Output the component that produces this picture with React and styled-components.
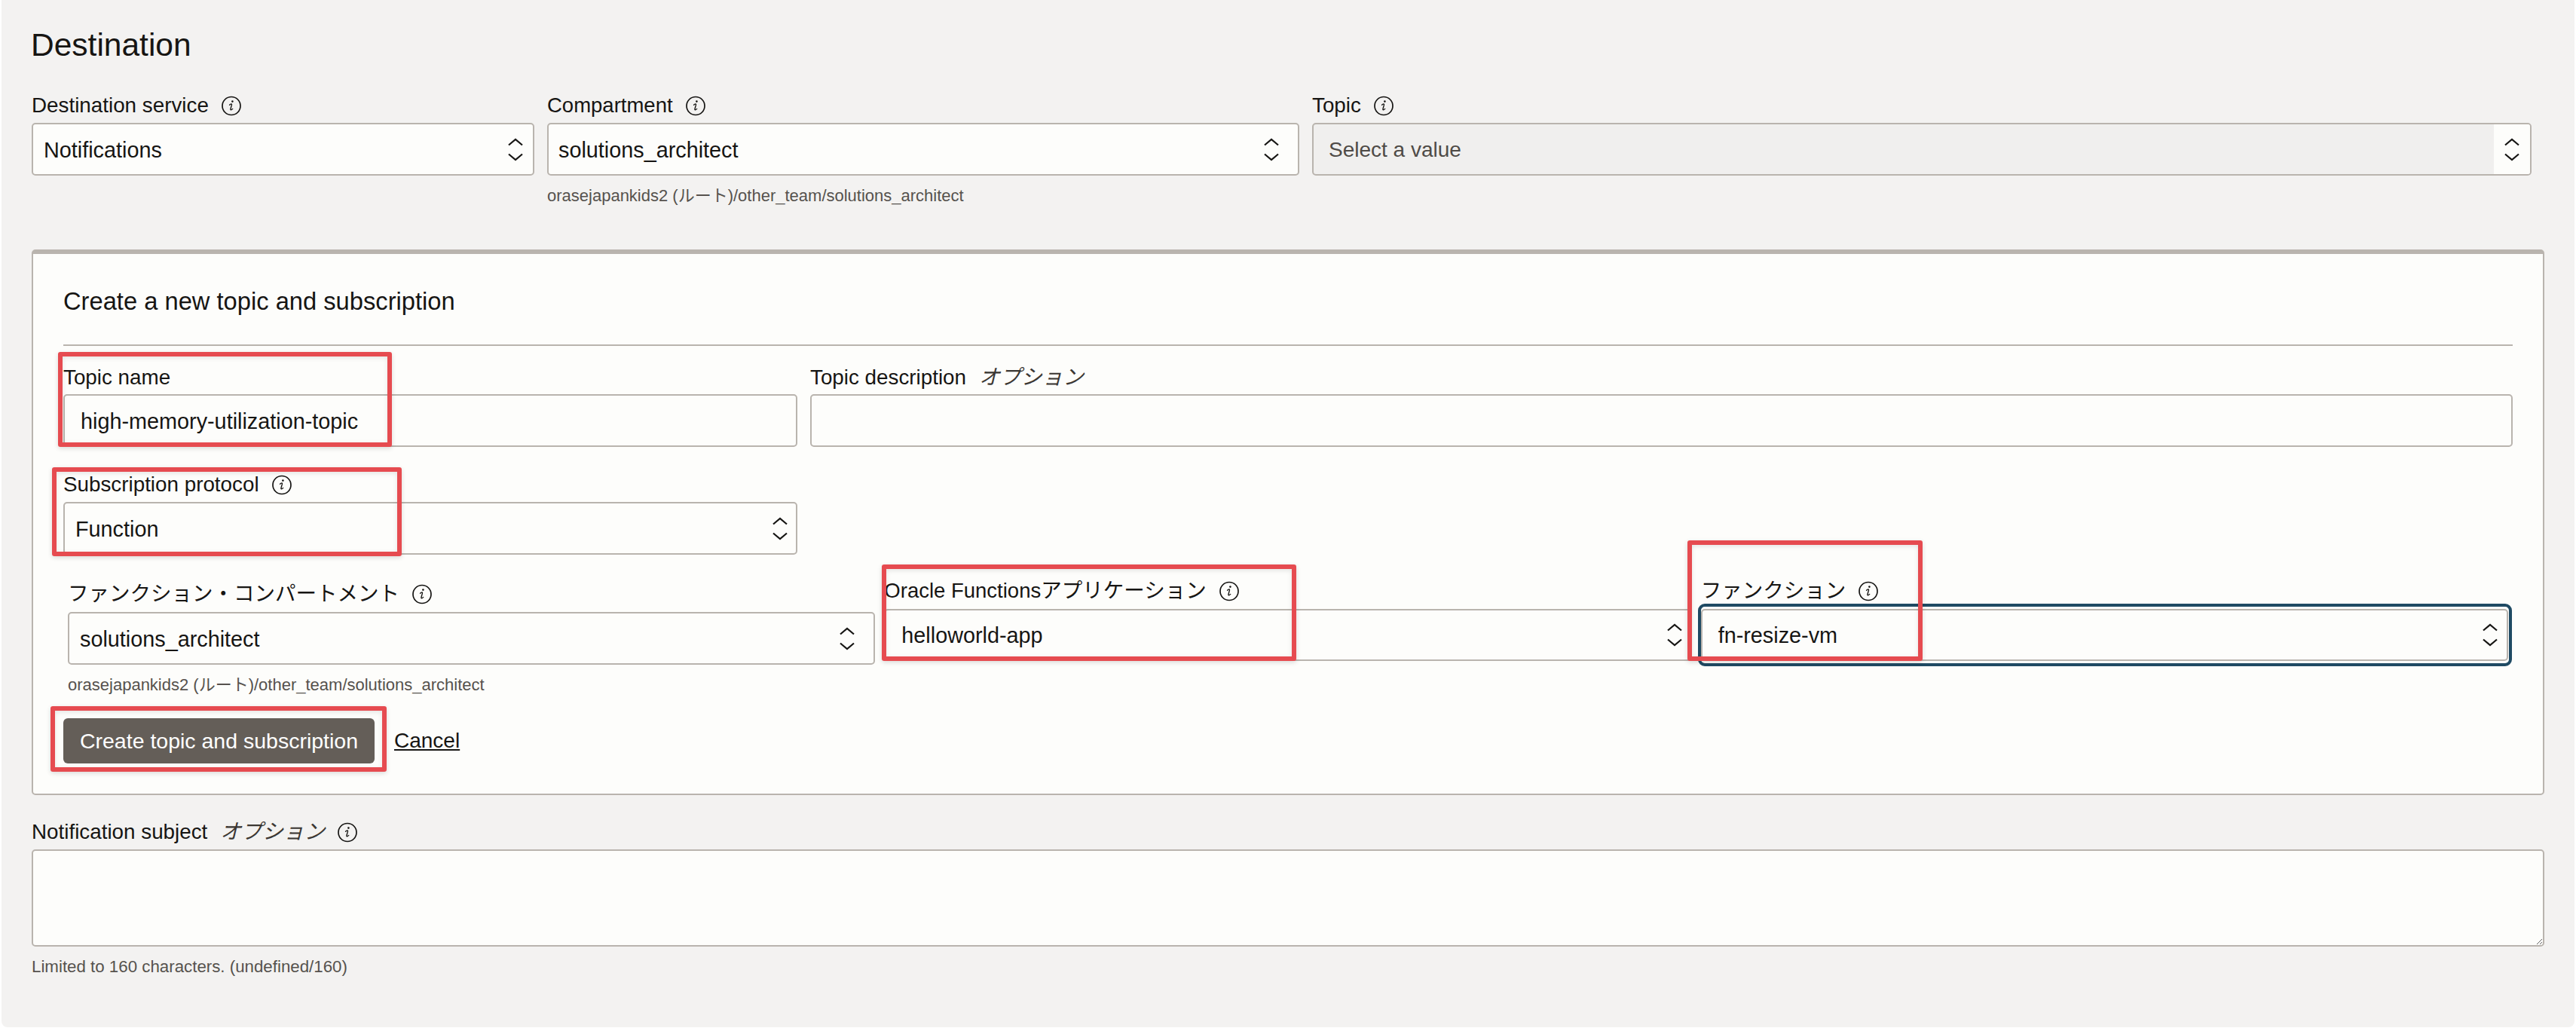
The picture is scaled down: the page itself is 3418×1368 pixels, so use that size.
import React from 'react';
import styled, { createGlobalStyle } from 'styled-components';

const GlobalStyle = createGlobalStyle`
  html, body {
    margin: 0;
    padding: 0;
    background: #ffffff;
  }
  * {
    box-sizing: border-box;
  }
`;

const Screen = styled.div`
  position: relative;
  width: 3418px;
  height: 1368px;
  overflow: hidden;
  background: #ffffff;
  font-family: "Liberation Sans", "Noto Sans CJK JP", sans-serif;
  color: #161513;
`;

const Page = styled.div`
  height: 1363px;
  margin: 0 2px;
  padding: 35px 40px 0 40px;
  background: #f3f2f1;
  border-radius: 0 0 8px 8px;
`;

const Heading = styled.h2`
  margin: 0 0 37px -1px;
  height: 50px;
  font-size: 42.5px;
  line-height: 50px;
  font-weight: 400;
`;

const TopRow = styled.div`
  display: grid;
  grid-template-columns: 667px 998px 1fr;
  gap: 17px;
  padding-right: 17px;
`;

const LabelRow = styled.div`
  display: flex;
  align-items: center;
  gap: 17px;
  height: 36px;
  margin-bottom: ${(p) => p.$gap || 5}px;
  font-size: ${(p) => (p.$cjk ? 27.5 : 27.8)}px;
  line-height: 36px;
  white-space: nowrap;
`;

const Optional = styled.span`
  font-style: italic;
  color: #3b3733;
`;

const Control = styled.div`
  position: relative;
  display: flex;
  align-items: center;
  height: ${(p) => p.$height || 70}px;
  padding: 2px 0 0 ${(p) => p.$pad || 21}px;
  background: ${(p) => (p.$disabled ? '#f0efee' : '#fdfdfb')};
  border: 2px solid #b9b4ae;
  border-radius: 5px;
  font-size: ${(p) => (p.$disabled ? 28 : 28.8)}px;
  color: ${(p) => (p.$disabled ? '#4f4b47' : '#161513')};
`;

const TextInput = styled.input`
  display: block;
  width: 100%;
  height: 70px;
  padding: 2px 21px 0;
  background: #fdfdfb;
  border: 2px solid #b9b4ae;
  border-radius: 5px;
  outline: none;
  font-family: inherit;
  font-size: 28.8px;
  color: #161513;
`;

const ArrowZone = styled.span`
  position: absolute;
  top: 0;
  right: 0;
  bottom: 0;
  width: ${(p) => p.$inset * 2 - 4}px;
  display: flex;
  align-items: center;
  justify-content: center;
  background: ${(p) => (p.$filled ? '#fdfdfb' : 'transparent')};
  border-radius: 0 3px 3px 0;
`;

const FocusRing = styled.span`
  position: absolute;
  top: -9px;
  right: -7px;
  bottom: -9px;
  left: -6px;
  border: 4px solid #1f4a63;
  border-radius: 9px;
  pointer-events: none;
`;

const Hint = styled.div`
  margin-top: 12px;
  height: 30px;
  font-size: ${(p) => p.$size || 22}px;
  line-height: 30px;
  color: #56524e;
  white-space: nowrap;
`;

const Panel = styled.section`
  margin-top: 56px;
  padding: 43px 40px 40px 40px;
  background: #fdfdfb;
  border: 2px solid #b9b4ae;
  border-top-width: 6px;
  border-radius: 5px;
`;

const PanelTitle = styled.h3`
  margin: 0;
  height: 40px;
  font-size: 32.7px;
  line-height: 40px;
  font-weight: 400;
`;

const Divider = styled.hr`
  margin: 37px 0 24px;
  height: 2px;
  border: none;
  background: #b9b4ae;
`;

const TopicRow = styled.div`
  display: grid;
  grid-template-columns: 974px 1fr;
  gap: 17px;
  margin-bottom: 32px;
`;

const ProtocolField = styled.div`
  width: 974px;
  margin-bottom: 30px;
`;

const FunctionRow = styled.div`
  display: grid;
  grid-template-columns: repeat(3, 1fr);
  gap: 12px;
  margin: 0 6px 29px 6px;
`;

const FunctionField = styled.div`
  margin-top: ${(p) => p.$offset || 0}px;
`;

const Actions = styled.div`
  display: flex;
  align-items: center;
  gap: 26px;
`;

const PrimaryButton = styled.button`
  width: 413px;
  height: 60px;
  padding: 0;
  background: #645e58;
  border: none;
  border-radius: 6px;
  font-family: inherit;
  font-size: 28.5px;
  color: #ffffff;
`;

const CancelLink = styled.a`
  font-size: 28px;
  color: #161513;
  text-decoration: underline;
`;

const SubjectField = styled.div`
  margin-top: 31px;
`;

const SubjectArea = styled.textarea`
  display: block;
  width: 100%;
  height: 129px;
  background: #fdfdfb;
  border: 2px solid #b9b4ae;
  border-radius: 5px;
  outline: none;
`;

const Marker = styled.div`
  position: absolute;
  left: ${(p) => p.$x}px;
  top: ${(p) => p.$y}px;
  width: ${(p) => p.$w}px;
  height: ${(p) => p.$h}px;
  border: 6px solid #e64b50;
  border-radius: 3px;
  box-shadow: 0 2px 6px rgba(0, 0, 0, 0.14), inset 0 2px 6px rgba(0, 0, 0, 0.1);
  pointer-events: none;
`;

const InfoIcon = () => (
  <svg width="26" height="27" viewBox="0 0 26 27" fill="none">
    <circle cx="13" cy="13.5" r="12" stroke="#161513" strokeWidth="1.7" />
    <circle cx="14.4" cy="7.6" r="1.3" fill="#161513" />
    <path
      d="M10.6 12.2c1-.9 2.5-1.5 2.9-.9.4.6-1.8 6-1.6 7 .2.9 1.8.2 2.8-.9"
      stroke="#161513"
      strokeWidth="1.4"
      strokeLinecap="round"
    />
  </svg>
);

const Chevrons = () => (
  <svg width="20" height="31" viewBox="0 0 20 31" fill="none">
    <path d="M1 9.5 10 2l9 7.5M1 21.5 10 29l9-7.5" stroke="#161513" strokeWidth="2.2" />
  </svg>
);

const Select = ({ value, pad, inset = 26, height, disabled, focused }) => (
  <Control $pad={pad} $height={height} $disabled={disabled}>
    {value}
    <ArrowZone $inset={inset} $filled={disabled}>
      <Chevrons />
    </ArrowZone>
    {focused && <FocusRing />}
  </Control>
);

const Label = ({ text, optional, info, gap, cjk }) => (
  <LabelRow $gap={gap} $cjk={cjk}>
    {text}
    {optional && <Optional>オプション</Optional>}
    {info && <InfoIcon />}
  </LabelRow>
);

const markers = [
  { x: 77, y: 467, w: 443, h: 126 },
  { x: 69, y: 620, w: 464, h: 118 },
  { x: 1170, y: 749, w: 550, h: 128 },
  { x: 2239, y: 717, w: 312, h: 160 },
  { x: 67, y: 937, w: 446, h: 87 },
];

const App = () => (
  <Screen>
    <GlobalStyle />
    <Page>
      <Heading>Destination</Heading>
      <TopRow>
        <div>
          <Label text="Destination service" info />
          <Select value="Notifications" pad={14} inset={25} />
        </div>
        <div>
          <Label text="Compartment" info cjk />
          <Select value="solutions_architect" pad={13} inset={37} />
          <Hint>orasejapankids2 (ルート)/other_team/solutions_architect</Hint>
        </div>
        <div>
          <Label text="Topic" info />
          <Select value="Select a value" pad={20} disabled />
        </div>
      </TopRow>
      <Panel>
        <PanelTitle>Create a new topic and subscription</PanelTitle>
        <Divider />
        <TopicRow>
          <div>
            <Label text="Topic name" gap={4} />
            <TextInput readOnly value="high-memory-utilization-topic" />
          </div>
          <div>
            <Label text="Topic description" optional gap={4} />
            <TextInput readOnly value="" />
          </div>
        </TopicRow>
        <ProtocolField>
          <Label text="Subscription protocol" info />
          <Select value="Function" pad={14} inset={23} />
        </ProtocolField>
        <FunctionRow>
          <FunctionField $offset={4}>
            <Label text="ファンクション・コンパートメント" info gap={6} cjk />
            <Select value="solutions_architect" pad={14} inset={37} />
            <Hint>orasejapankids2 (ルート)/other_team/solutions_architect</Hint>
          </FunctionField>
          <FunctionField>
            <Label text="Oracle Functionsアプリケーション" info gap={6} cjk />
            <Select value="helloworld-app" height={69} inset={23} />
          </FunctionField>
          <FunctionField>
            <Label text="ファンクション" info gap={6} cjk />
            <Select value="fn-resize-vm" height={69} inset={24} focused />
          </FunctionField>
        </FunctionRow>
        <Actions>
          <PrimaryButton>Create topic and subscription</PrimaryButton>
          <CancelLink>Cancel</CancelLink>
        </Actions>
      </Panel>
      <SubjectField>
        <Label text="Notification subject" optional info />
        <SubjectArea readOnly />
        <Hint $size={22.3}>Limited to 160 characters. (undefined/160)</Hint>
      </SubjectField>
    </Page>
    {markers.map((m) => (
      <Marker key={m.x} $x={m.x} $y={m.y} $w={m.w} $h={m.h} />
    ))}
  </Screen>
);

export default App;
